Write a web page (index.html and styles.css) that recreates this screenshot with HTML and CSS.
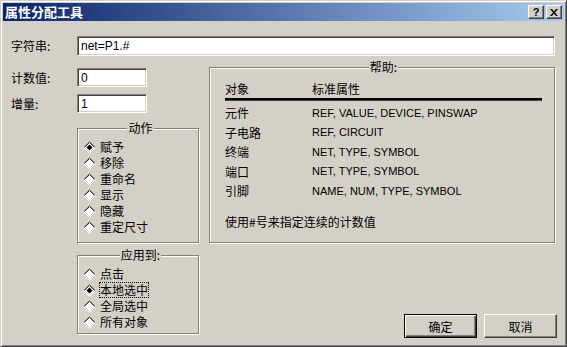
FILE: index.html
```html
<!DOCTYPE html>
<html lang="zh">
<head>
<meta charset="utf-8">
<title>属性分配工具</title>
<link rel="stylesheet" href="styles.css">
</head>
<body>
<svg width="0" height="0" class="defs">
  <symbol id="rd" viewBox="0 0 13 13">
    <polygon points="6.5,0.5 12.5,6.5 6.5,12.5 0.5,6.5" fill="#fff"/>
    <polyline points="0.5,6.5 6.5,0.5 12.5,6.5" stroke="#808080" fill="none"/>
    <polyline points="1.5,6.5 6.5,1.5 11.5,6.5" stroke="#404040" fill="none"/>
    <polyline points="0.5,6.5 6.5,12.5 12.5,6.5" stroke="#ffffff" fill="none"/>
    <polyline points="1.5,6.5 6.5,11.5 11.5,6.5" stroke="#d4d0c8" fill="none"/>
  </symbol>
  <symbol id="rdc" viewBox="0 0 13 13">
    <use href="#rd"/>
    <polygon points="6.5,3.5 9.5,6.5 6.5,9.5 3.5,6.5" fill="#000"/>
  </symbol>
</svg>
<div class="window">
  <div class="titlebar">
    <span class="title">属性分配工具</span>
    <div class="tbtns">
      <span class="tbtn q">?</span>
      <span class="tbtn"><svg width="8" height="7" viewBox="0 0 8 7"><path d="M0 0h2l2 2.5L6 0h2L5 3.5 8 7H6L4 4.5 2 7H0l3-3.5z" fill="#000"/></svg></span>
    </div>
  </div>
  <div class="content">
    <div class="row1">
      <span class="lbl">字符串:</span>
      <div class="input wide">net=P1.#</div>
    </div>
    <div class="main">
      <div class="left">
        <div class="field"><span class="lbl">计数值:</span><div class="input small">0</div></div>
        <div class="field f2"><span class="lbl">增量:</span><div class="input small">1</div></div>
        <fieldset class="group action">
          <legend>动作</legend>
          <div class="radio"><svg width="13" height="13"><use href="#rdc"/></svg><span>赋予</span></div>
          <div class="radio"><svg width="13" height="13"><use href="#rd"/></svg><span>移除</span></div>
          <div class="radio"><svg width="13" height="13"><use href="#rd"/></svg><span>重命名</span></div>
          <div class="radio"><svg width="13" height="13"><use href="#rd"/></svg><span>显示</span></div>
          <div class="radio"><svg width="13" height="13"><use href="#rd"/></svg><span>隐藏</span></div>
          <div class="radio"><svg width="13" height="13"><use href="#rd"/></svg><span>重定尺寸</span></div>
        </fieldset>
        <fieldset class="group apply">
          <legend>应用到:</legend>
          <div class="radio"><svg width="13" height="13"><use href="#rd"/></svg><span>点击</span></div>
          <div class="radio"><svg width="13" height="13"><use href="#rdc"/></svg><span class="focus">本地选中</span></div>
          <div class="radio"><svg width="13" height="13"><use href="#rd"/></svg><span>全局选中</span></div>
          <div class="radio"><svg width="13" height="13"><use href="#rd"/></svg><span>所有对象</span></div>
        </fieldset>
      </div>
      <div class="right">
        <fieldset class="group help">
          <legend>帮助:</legend>
          <div class="hrow head"><span>对象</span><span>标准属性</span></div>
          <div class="rule"></div>
          <div class="hrow"><span>元件</span><span class="lat">REF, VALUE, DEVICE, PINSWAP</span></div>
          <div class="hrow"><span>子电路</span><span class="lat">REF, CIRCUIT</span></div>
          <div class="hrow"><span>终端</span><span class="lat">NET, TYPE, SYMBOL</span></div>
          <div class="hrow"><span>端口</span><span class="lat">NET, TYPE, SYMBOL</span></div>
          <div class="hrow"><span>引脚</span><span class="lat">NAME, NUM, TYPE, SYMBOL</span></div>
          <div class="note">使用#号来指定连续的计数值</div>
        </fieldset>
        <div class="buttons">
          <div class="btn default">确定</div>
          <div class="btn">取消</div>
        </div>
      </div>
    </div>
  </div>
</div>
</body>
</html>
```

FILE: styles.css
```css
* { box-sizing: border-box; }
html, body { margin: 0; padding: 0; background: #d4d0c8; }
body {
  font-family: "Noto Sans CJK SC", "Liberation Sans", sans-serif;
  font-size: 12px;
  color: #000;
}
.defs { position: absolute; width: 0; height: 0; }

.window {
  width: 567px;
  height: 347px;
  background: #d4d0c8;
  border: 1px solid;
  border-color: #d4d0c8 #404040 #404040 #d4d0c8;
  box-shadow: inset 1px 1px 0 #fff, inset -1px -1px 0 #808080;
  padding: 2px;
}

.titlebar {
  height: 18px;
  background: linear-gradient(to right, #0a246a, #a6caf0);
  display: flex;
  align-items: center;
  padding: 0 2px 0 2px;
}
.title {
  color: #fff;
  font-weight: bold;
  font-size: 13px;
  line-height: 18px;
  letter-spacing: 0px;
}
.tbtns { margin-left: auto; display: flex; gap: 2px; }
.tbtn {
  width: 16px;
  height: 14px;
  background: #d4d0c8;
  border: 1px solid;
  border-color: #fff #404040 #404040 #fff;
  box-shadow: inset -1px -1px 0 #808080;
  display: flex;
  align-items: center;
  justify-content: center;
}
.tbtn.q {
  font-family: "Liberation Sans", sans-serif;
  font-weight: bold;
  font-size: 11px;
  line-height: 12px;
}

.content { padding: 0 7px 0 8px; }

.row1 {
  display: flex;
  align-items: center;
  margin-top: 15px;
  height: 20px;
}
.lbl { width: 66px; flex: none; line-height: 16px; }
.input {
  background: #fff;
  border: 1px solid;
  border-color: #808080 #fff #fff #808080;
  box-shadow: inset 1px 1px 0 #404040, inset -1px -1px 0 #d4d0c8;
  font-family: "Liberation Sans", sans-serif;
  font-size: 12px;
  display: flex;
  align-items: center;
  padding-left: 3px;
}
.input.wide { flex: 1; height: 20px; margin-right: 2px; }
.input.small { width: 70px; height: 19px; }

.main {
  display: grid;
  grid-template-columns: 198px 1fr;
  margin-top: 4px;
}
.left { padding-top: 8px; }
.field { display: flex; align-items: center; height: 19px; }
.field.f2 { margin-top: 7px; }

.group {
  margin: 0;
  border: 1px solid #808080;
  box-shadow: 1px 1px 0 #fff, inset 1px 1px 0 #fff;
  min-width: 0;
}
.group legend {
  margin: 0 auto;
  padding: 0 1px;
  line-height: 14px;
  background: #d4d0c8;
}
.action { margin: 8px 0 0 66px; width: 122px; padding: 4px 0 7px 5px; }
.apply { margin: 5px 0 0 66px; width: 122px; padding: 4px 0 3px 5px; }
.radio {
  display: flex;
  align-items: center;
  gap: 4px;
  height: 16px;
  line-height: 14px;
}
.radio svg { flex: none; }
.focus { outline: 1px dotted #000; outline-offset: 0; }

.help { width: 346px; padding: 5px 12px 13px 15px; }
.hrow {
  display: grid;
  grid-template-columns: 87px 1fr;
  height: 19.5px;
  align-items: center;
}
.hrow.head { height: 18px; }
.rule {
  height: 3px;
  background: #000;
  border-bottom: 1px solid #404040;
  margin-top: 1px;
  margin-bottom: 2px;
}
.lat { font-family: "Liberation Sans", sans-serif; font-size: 11px; }
.note { margin-top: 14.5px; line-height: 14px; }

.buttons {
  display: flex;
  justify-content: flex-end;
  gap: 7px;
  margin-top: 71px;
}
.btn {
  width: 73px;
  height: 24px;
  border: 1px solid;
  border-color: #fff #404040 #404040 #fff;
  box-shadow: inset -1px -1px 0 #808080;
  display: flex;
  align-items: center;
  justify-content: center;
}
.btn.default {
  border: 1px solid #000;
  box-shadow: inset 1px 1px 0 #fff, inset -1px -1px 0 #404040, inset -2px -2px 0 #808080;
}
```
